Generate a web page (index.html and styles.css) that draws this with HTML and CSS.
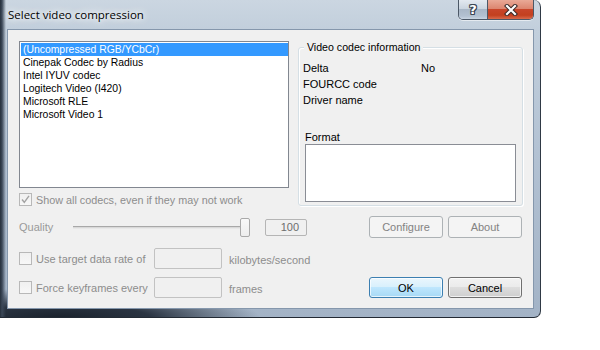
FILE: index.html
```html
<!DOCTYPE html>
<html>
<head>
<meta charset="utf-8">
<title>Select video compression</title>
<link rel="stylesheet" href="styles.css">
</head>
<body>
<div class="window">
  <div class="titlebar">
    <span class="title">Select video compression</span>
    <div class="caption">
      <div class="cap help">?</div>
      <div class="cap close">
        <svg width="14" height="12" viewBox="0 0 14 12">
          <path d="M3 2 L11 10 M11 2 L3 10" stroke="#3a2a28" stroke-width="4.2" stroke-linecap="square" fill="none"/>
          <path d="M3 2 L11 10 M11 2 L3 10" stroke="#ffffff" stroke-width="2.2" stroke-linecap="square" fill="none"/>
        </svg>
      </div>
    </div>
  </div>
  <div class="client">
    <div class="top">
      <div class="leftcol">
        <ul class="listbox">
          <li class="sel">(Uncompressed RGB/YCbCr)</li>
          <li>Cinepak Codec by Radius</li>
          <li>Intel IYUV codec</li>
          <li>Logitech Video (I420)</li>
          <li>Microsoft RLE</li>
          <li>Microsoft Video 1</li>
        </ul>
        <div class="chk disabled showall">
          <span class="box"><svg width="11" height="11" viewBox="0 0 11 11"><path d="M2 5.5 L4.3 8.3 L9 1.8" stroke="#a3a3a3" stroke-width="1.4" fill="none"/></svg></span>
          <span>Show all codecs, even if they may not work</span>
        </div>
      </div>
      <div class="group">
        <div class="legend">Video codec information</div>
        <div class="info">
          <div class="info-row"><span class="k">Delta</span><span class="v">No</span></div>
          <div class="info-row"><span class="k">FOURCC code</span></div>
          <div class="info-row"><span class="k">Driver name</span></div>
        </div>
        <div class="format-label">Format</div>
        <div class="format-box"></div>
      </div>
    </div>

    <div class="row quality">
      <span class="qlabel">Quality</span>
      <div class="slider">
        <div class="track"></div>
        <div class="thumb"></div>
      </div>
      <div class="edit num">100</div>
      <div class="btns">
        <div class="btn disabled">Configure</div>
        <div class="btn disabled">About</div>
      </div>
    </div>

    <div class="row rate">
      <div class="chk disabled wide">
        <span class="box"></span>
        <span>Use target data rate of</span>
      </div>
      <div class="edit field"></div>
      <span class="unit">kilobytes/second</span>
    </div>

    <div class="row keys">
      <div class="chk disabled wide">
        <span class="box"></span>
        <span>Force keyframes every</span>
      </div>
      <div class="edit field"></div>
      <span class="unit">frames</span>
      <div class="btns">
        <div class="btn ok">OK</div>
        <div class="btn cancel">Cancel</div>
      </div>
    </div>
  </div>
</div>
</body>
</html>
```

FILE: styles.css
```css
* { box-sizing: border-box; }
html, body { margin: 0; padding: 0; background: #ffffff; }
body {
  width: 600px;
  height: 350px;
  overflow: hidden;
  font-family: "Liberation Sans", Arial, sans-serif;
  font-size: 11px;
  color: #000;
}

.window {
  width: 541px;
  height: 318px;
  padding: 0 6px 8px 7px;
  border-right: 1px solid #2f3945;
  border-bottom: 1px solid #222a34;
  border-radius: 0 7px 7px 0;
  display: flex;
  flex-direction: column;
  background:
    linear-gradient(to right, #26303c 0px, #3b4757 2px, rgba(120,138,160,0) 6px),
    radial-gradient(ellipse 200px 30px at 60px 318px, #1a222c 0%, #2a3442 45%, rgba(40,50,64,0) 100%),
    linear-gradient(to bottom, #cbd6e1 0px, #c2cfdc 29px, #b3c2d3 150px, #a3b3c6 318px);
}

.titlebar {
  height: 29px;
  display: flex;
  align-items: flex-start;
}
.title {
  margin: 7px 0 0 1px;
  font-family: "Open Sans", "Noto Sans", sans-serif;
  font-size: 11.5px;
  line-height: 16px;
  color: #000;
  text-shadow: 0 0 5px #fff, 0 0 9px #fff, 0 0 14px rgba(255,255,255,0.9);
}
.caption {
  margin-left: auto;
  display: flex;
  height: 20px;
  border: 1px solid #4c5867;
  border-top: none;
  border-radius: 0 0 5px 5px;
  overflow: hidden;
  box-shadow: 0 1px 0 rgba(255,255,255,0.55);
}
.cap {
  height: 19px;
  display: flex;
  align-items: center;
  justify-content: center;
}
.help {
  width: 29px;
  border-right: 1px solid #4c5867;
  background: linear-gradient(to bottom, #e3e9f0 0%, #cbd5e0 45%, #a9b7c7 50%, #b3c1d1 85%, #c9d5e2 100%);
  color: #fff;
  font-family: "DejaVu Sans", sans-serif;
  font-weight: bold;
  font-size: 13px;
  text-shadow: 1px 0 #3b4654, -1px 0 #3b4654, 0 1px #3b4654, 0 -1px #3b4654, 1px 1px #3b4654, -1px -1px #3b4654, 1px -1px #3b4654, -1px 1px #3b4654;
}
.close {
  width: 45px;
  background: linear-gradient(to bottom, #e9a997 0%, #dc8670 45%, #c8452a 50%, #c3401f 80%, #d86a4c 100%);
}

.client {
  height: 280px;
  border: 1px solid #8597ac;
  background: #f0f0f0;
  padding: 11px 10px 0 11px;
  display: flex;
  flex-direction: column;
}

.top {
  display: flex;
  gap: 9px;
  height: 165px;
}
.leftcol {
  width: 270px;
  display: flex;
  flex-direction: column;
}
.listbox {
  list-style: none;
  margin: 0;
  padding: 1px 0 1px 1px;
  height: 147px;
  border: 1px solid #828790;
  background: #fff;
  font-size: 10.4px;
}
.listbox li {
  height: 13px;
  line-height: 13px;
  padding-left: 2px;
  white-space: nowrap;
}
.listbox li.sel {
  background: #3399ff;
  color: #fff;
}

.chk {
  display: flex;
  align-items: center;
  gap: 4px;
  white-space: nowrap;
}
.chk.disabled { color: #8d8d8d; }
.showall { margin-top: 5px; height: 13px; font-size: 10.8px; }
.box {
  width: 13px;
  height: 13px;
  border: 1px solid #b8b8b8;
  background: linear-gradient(to bottom, #f0f0f0, #f7f7f7);
  display: flex;
  align-items: center;
  justify-content: center;
  flex: none;
}
.chk.wide { width: 135px; }

.group {
  width: 225px;
  height: 159px;
  margin-top: 6px;
  border: 1px solid #d5dfe5;
  border-radius: 3px;
  box-shadow: inset 1px 1px 0 #fff, 1px 1px 0 #fff;
  display: flex;
  flex-direction: column;
  padding-left: 4px;
}
.legend {
  align-self: flex-start;
  margin: -7px 0 0 1px;
  padding: 0 3px;
  height: 13px;
  line-height: 13px;
  background: #f0f0f0;
  font-size: 10.6px;
}
.info { padding-top: 6px; }
.info-row {
  display: flex;
  height: 16px;
  line-height: 16px;
}
.info-row .k { width: 118px; }
.format-label {
  margin: 23px 0 0 2px;
  height: 13px;
  line-height: 13px;
}
.format-box {
  margin-left: 2px;
  width: 211px;
  height: 58px;
  border: 1px solid #8a8d95;
  background: #fff;
}

.row {
  display: flex;
  align-items: center;
}
.quality { margin-top: 10px; height: 22px; }
.rate { margin-top: 10px; height: 21px; }
.keys { margin-top: 8px; height: 21px; }

.qlabel { width: 54px; color: #9a9a9a; }
.slider {
  width: 177px;
  height: 19px;
  display: flex;
  align-items: center;
}
.track {
  flex: 1;
  height: 3px;
  border-top: 1px solid #a8a8a8;
  border-bottom: 1px solid #e8e8e8;
  background: #d9d9d9;
}
.thumb {
  width: 10px;
  height: 19px;
  margin-left: -5px;
  border: 1px solid #a9a9a9;
  border-radius: 2px;
  background: linear-gradient(to bottom, #f9f9f9, #ededed);
}
.edit {
  border: 1px solid #c2c2c2;
  border-radius: 2px;
  background: #f0f0f0;
}
.edit.num {
  margin-left: 15px;
  width: 42px;
  height: 17px;
  line-height: 15px;
  text-align: right;
  padding-right: 7px;
  color: #6d6d6d;
  border-color: #b5b5b5;
}
.edit.field {
  width: 68px;
  height: 21px;
}
.unit {
  margin-left: 7px;
  color: #8d8d8d;
  padding-top: 2px;
}

.btns {
  margin-left: auto;
  margin-right: 1px;
  display: flex;
  gap: 5px;
}
.btn {
  width: 74px;
  height: 22px;
  border: 1px solid #707070;
  border-radius: 3px;
  display: flex;
  align-items: center;
  justify-content: center;
}
.keys .btn { height: 21px; }
.btn.disabled {
  border-color: #adb2b5;
  background: #f4f4f4;
  color: #838383;
}
.btn.ok {
  border-color: #3c7fb1;
  background: linear-gradient(to bottom, #eaf6fd 0%, #d9f0fc 45%, #bee6fd 50%, #a7d9f5 100%);
  box-shadow: inset 0 0 0 1px rgba(255,255,255,0.7);
}
.btn.cancel {
  background: linear-gradient(to bottom, #f2f2f2 0%, #ebebeb 45%, #dddddd 50%, #cfcfcf 100%);
  box-shadow: inset 0 0 0 1px rgba(255,255,255,0.7);
}
```
